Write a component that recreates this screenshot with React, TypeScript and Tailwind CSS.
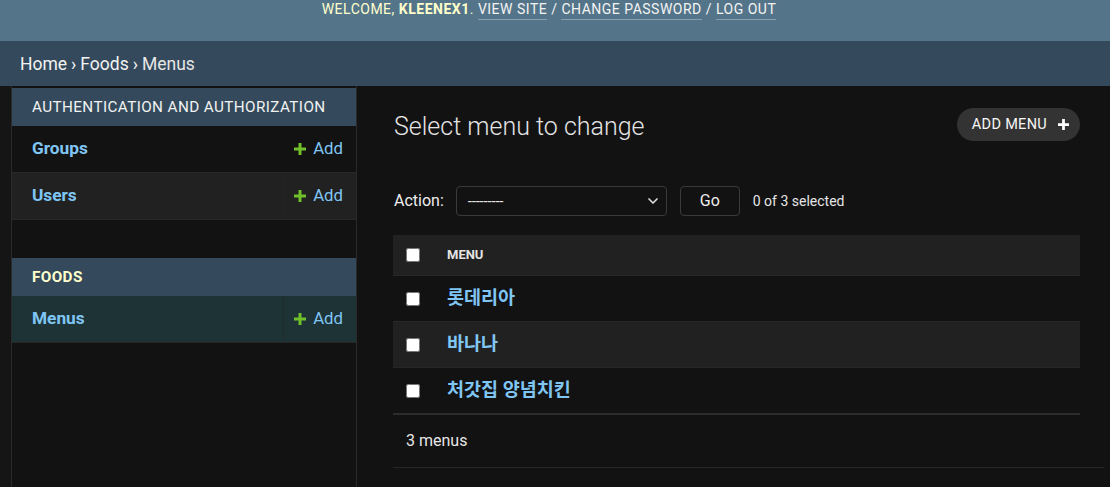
import { ChevronDown } from "lucide-react";

const font = "font-['Roboto','Noto_Sans_CJK_KR',sans-serif]";

function PlusIcon({ className }: { className?: string }) {
  return (
    <svg viewBox="0 0 12 12" className={className} aria-hidden>
      <path d="M4.5 0h3v4.5H12v3H7.5V12h-3V7.5H0v-3h4.5z" fill="currentColor" />
    </svg>
  );
}

function SidebarModule({
  title,
  current,
  rows,
}: {
  title: string;
  current?: boolean;
  rows: { name: string; selected?: boolean; shade?: boolean }[];
}) {
  return (
    <div className="mb-[38px]">
      <div
        className={`h-[38px] flex items-center bg-[#344a5c] px-5 text-[15.25px] tracking-[0.4px] ${
          current ? "font-bold text-[#ffffcc]" : "text-[#f2f2f2]"
        }`}
      >
        {title}
      </div>
      {rows.map((row) => (
        <div
          key={row.name}
          className={`flex h-[47px] border-b border-[#272727] ${
            row.selected ? "bg-[#1d3336]" : row.shade ? "bg-[#212121]" : "bg-[#121212]"
          }`}
        >
          <div className="flex-1 flex items-center px-5 text-[17.25px] font-bold text-[#80c6f4]">
            {row.name}
          </div>
          <div
            className={`w-[73px] flex items-center justify-end gap-[7px] pr-[13px] text-[16.75px] text-[#80c6f4] ${
              row.selected || row.shade ? "border-l border-[#272727]/70" : ""
            }`}
          >
            <PlusIcon className="w-[12px] h-[12px] text-[#70bf2b]" />
            Add
          </div>
        </div>
      ))}
    </div>
  );
}

const menus = ["롯데리아", "바나나", "처갓집 양념치킨"];

export default function App() {
  return (
    <div className={`min-h-screen flex flex-col bg-[#121212] text-[#eeeeee] ${font}`}>
      <header className="h-[41px] bg-[#547589] flex justify-center pt-[1px] pr-[12px]">
        <div className="text-[14px] tracking-[0.5px] uppercase text-[#ffffcc] leading-[17px]">
          Welcome, <strong className="font-bold">kleenex1</strong>.{" "}
          <a className="text-[#f3f3f3] border-b border-white/30 pb-[2px]">View site</a>
          <span className="text-[#f3f3f3]"> / </span>
          <a className="text-[#f3f3f3] border-b border-white/30 pb-[2px]">Change password</a>
          <span className="text-[#f3f3f3]"> / </span>
          <a className="text-[#f3f3f3] border-b border-white/30 pb-[2px]">Log out</a>
        </div>
      </header>

      <div className="h-[45px] bg-[#344a5c] flex items-center pt-[2px] px-5 text-[17.5px] text-[#f3f3f3]">
        <span>Home</span>
        <span className="mx-[4px]">›</span>
        <span>Foods</span>
        <span className="mx-[4px]">›</span>
        <span className="text-[#e6e6e6]">Menus</span>
      </div>

      <div className="flex flex-1">
        <div className="w-[12px] border-r border-[#2a2a2a] bg-[#151515]" />
        <nav className="w-[345px] border-r border-[#2a2a2a] pt-[2px]">
          <SidebarModule
            title="AUTHENTICATION AND AUTHORIZATION"
            rows={[{ name: "Groups" }, { name: "Users", shade: true }]}
          />
          <SidebarModule title="FOODS" current rows={[{ name: "Menus", selected: true }]} />
        </nav>

        <main className="flex-1 pl-[36px] pr-[30px] pt-[22px]">
          <div className="flex items-start justify-between">
            <h1 className="ml-[1px] text-[25px] font-light text-[#e4e4e4] leading-[38px]">
              Select menu to change
            </h1>
            <a className="h-[33px] flex items-center gap-[11px] rounded-full bg-[#333333] pl-[15px] pr-[11px] text-[14.5px] tracking-[0.3px] text-[#f7f7f7]">
              ADD MENU
              <PlusIcon className="w-[11px] h-[11px] text-white" />
            </a>
          </div>

          <div className="flex items-center mt-[40px] h-[30px] text-[16px]">
            <span className="ml-[1px] mr-[12px]">Action:</span>
            <div className="w-[211px] h-[30px] border border-[#3a3a3a] rounded-[4px] flex items-center justify-between pl-[11px] pr-[5px]">
              <span className="text-[15px] tracking-[-0.2px] text-[#e6e6e6]">---------</span>
              <ChevronDown className="w-[16px] h-[16px] text-[#dddddd]" strokeWidth={2.5} />
            </div>
            <div className="ml-[13px] w-[60px] h-[30px] border border-[#3a3a3a] rounded-[4px] flex items-center justify-center text-[16px]">
              Go
            </div>
            <span className="ml-[13px] text-[14px] text-[#e6e6e6]">0 of 3 selected</span>
          </div>

          <div className="mt-[19px]">
            <div className="h-[41px] bg-[#212121] flex items-center border-b border-[#272727]">
              <input type="checkbox" className="ml-[13px] m-0 w-[14px] h-[14px]" readOnly />
              <span className="ml-[27px] text-[13px] font-bold text-[#e4e4e4]">MENU</span>
            </div>
            {menus.map((name, i) => (
              <div
                key={name}
                className={`flex items-center ${i === 1 ? "bg-[#212121]" : "bg-[#121212]"} ${
                  i === menus.length - 1
                    ? "h-[47px] border-b-2 border-[#2c2c2c]"
                    : "h-[46px] border-b border-[#272727]"
                }`}
              >
                <input type="checkbox" className="ml-[13px] m-0 w-[14px] h-[14px]" readOnly />
                <span className="ml-[27px] text-[18.5px] font-bold text-[#80c6f4]">{name}</span>
              </div>
            ))}
          </div>

          <div className="h-[53px] flex items-center pl-[13px] text-[16px] text-[#e6e6e6] border-b border-[#272727] -mr-[24px]">
            3 menus
          </div>
        </main>
      </div>
    </div>
  );
}
